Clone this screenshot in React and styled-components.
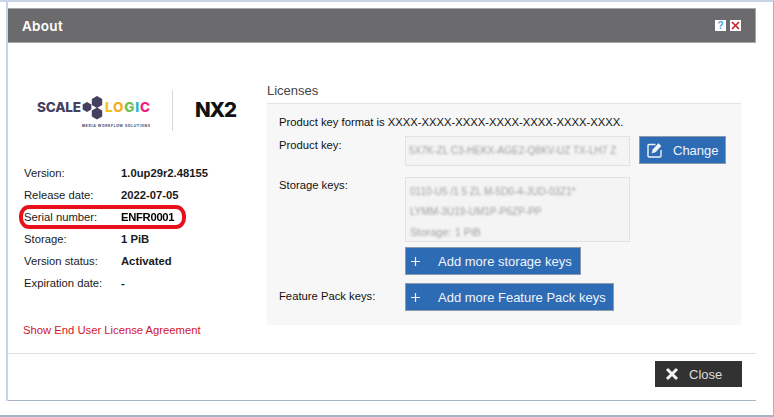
import React from 'react';
import styled, { createGlobalStyle } from 'styled-components';

const Global = createGlobalStyle`
  html, body { margin: 0; padding: 0; background: #fff; overflow: hidden; }
  body { font-family: "Liberation Sans", Arial, sans-serif; }
  * { box-sizing: border-box; }
`;
const Page = styled.div`
  width: 774px; height: 417px; background: #fff; overflow: hidden;
  border-top: 2px solid #c9d5e6; border-right: 1px solid #a9b4c8; border-bottom: 2px solid #a9b4c8;
`;
const Frame = styled.div`
  height: 399px; margin-left: 6px; padding-top: 6px;
  border-left: 2px solid #c9d5e6;
  display: flex; flex-direction: column;
`;
const Header = styled.div`
  width: 748px; height: 35px; flex: none; background: #6b6b6d; border: 1px solid #a8a8a8; border-left-width: 0;
  display: flex; align-items: center; justify-content: space-between; padding: 0 14px;
`;
const Title = styled.div`
  font: 600 13.5px "Inter", "Liberation Sans", sans-serif; color: #fff; letter-spacing: .3px;
`;
const HeaderBtns = styled.div` display: flex; gap: 4px; `;
const MiniBtn = styled.div`
  width: 11px; height: 11px; background: #fff; color: ${p => p.$c}; font: 700 10px/11px "Liberation Sans", sans-serif;
  display: flex; align-items: center; justify-content: center;
`;
const Body = styled.div`
  height: 311px; width: 748px; flex: none; display: flex; border-bottom: 1px solid #e0e0e0;
`;
const Left = styled.div`
  width: 259px; padding: 42px 0 0 15px; display: flex; flex-direction: column;
`;
const LogoSvg = styled.svg` display: block; margin-left: 14px; `;
const Info = styled.div`
  margin-top: 29px; display: grid; grid-template-columns: 98px 1fr; grid-auto-rows: 22px; align-items: center;
  font-size: 11.25px; color: #1a1a1a; position: relative;
`;
const Label = styled.div` white-space: nowrap; margin-left: 1px; `;
const Value = styled.div` font-weight: 700; white-space: nowrap; `;
const Serial = styled(Value)` filter: blur(.5px); letter-spacing: -.3px; color: #000; `;
const Ring = styled.div`
  position: absolute; left: -4px; top: 43px; width: 167px; height: 24px;
  border: 4px solid #e8101c; border-radius: 10px / 11px;
`;
const Eula = styled.div` margin-top: 30px; font-size: 11.25px; color: #d0142c; `;
const Right = styled.div` flex: 1; padding-top: 41px; display: flex; flex-direction: column; `;
const PanelTitle = styled.div` font-size: 13px; color: #444; height: 19px; line-height: 13px; `;
const Panel = styled.div`
  width: 474px; height: 222px; background: #f7f7f7; border-top: 1px solid #e4e4e4; padding: 12px 12px 0;
  font-size: 11.25px; line-height: 13px; color: #111;
`;
const Row = styled.div` display: grid; grid-template-columns: 126px 1fr; margin-top: ${p => p.$mt || 0}px; `;
const RowLabel = styled.div` padding-top: ${p => p.$pt || 0}px; `;
const KeyBox = styled.div`
  border: 1px solid #e2e2e2; background: #f4f4f4; width: 225px; height: ${p => p.$h}px; color: #a0a0a0;
  font-size: 10px; line-height: 20px; padding: ${p => p.$pad}; white-space: nowrap; overflow: hidden;
`;
const Fuzzy = styled.div` filter: blur(.8px); font-size: ${p => p.$fs || 10}px; `;
const Btn = styled.div`
  background: #2e6bb5; border: 1px solid #8d9aab; color: #f0f4fa; height: 28px; display: inline-flex; align-items: center;
  font-size: 13px; width: ${p => p.$w}px; padding-left: ${p => p.$pl}px; gap: ${p => p.$gap}px;
`;
const Inline = styled.div` display: flex; align-items: flex-start; gap: 9px; `;
const Footer = styled.div`
  height: 47px; width: 748px; flex: none; display: flex; justify-content: flex-end; align-items: flex-start; padding: 7px 14px 0 0;
  border-bottom: 1px solid #a9b4c8;
`;
const CloseBtn = styled.div`
  width: 87px; height: 26px; background: #323232; color: #ddd; display: flex; align-items: center; padding-left: 10px; gap: 10px; font-size: 13px;
`;

const hex = (cx, cy, r) => {
  const pts = [];
  for (let i = 0; i < 6; i++) {
    const a = (Math.PI / 3) * i + Math.PI / 6;
    pts.push(`${(cx + r * Math.cos(a)).toFixed(2)},${(cy + r * Math.sin(a)).toFixed(2)}`);
  }
  return pts.join(' ');
};

const Logo = () => (
  <LogoSvg width="205" height="48" viewBox="0 0 205 48">
    <text x="0" y="27" fontFamily="Inter, Liberation Sans, sans-serif" fontWeight="800" fontSize="13.500" fill="#45405f" textLength="44">SCALE</text>
    <g fill="#45405f">
      <polygon points={hex(50, 22, 5)} /><polygon points={hex(60, 17, 6)} /><polygon points={hex(60, 28.500, 6)} />
    </g>
    <text x="68" y="27" fontFamily="Inter, Liberation Sans, sans-serif" fontWeight="800" fontSize="13.500" textLength="45">
      <tspan fill="#f5c518">L</tspan><tspan fill="#f2b01c">O</tspan><tspan fill="#6cc24a">G</tspan><tspan fill="#1fb5d6">I</tspan><tspan fill="#ee1e7c">C</tspan>
    </text>
    <text x="45" y="41.500" fontFamily="Inter, Liberation Sans, sans-serif" fontWeight="700" fontSize="3.400" fill="#45405f" textLength="68">MEDIA WORKFLOW SOLUTIONS</text>
    <line x1="135.500" y1="5" x2="135.500" y2="46" stroke="#d8d8d8" />
    <text x="158" y="32" fontFamily="Inter, Liberation Sans, sans-serif" fontWeight="800" fontSize="20.500" fill="#111" textLength="42">NX2</text>
  </LogoSvg>
);

const Plus = () => (
  <svg width="11" height="11" viewBox="0 0 11 11"><path d="M5.500 1v9M1 5.500h9" stroke="#f0f4fa" strokeWidth="1.200" /></svg>
);

export default function App() {
  return (
    <Page>
      <Global />
      <Frame>
        <Header>
          <Title>About</Title>
          <HeaderBtns>
            <MiniBtn $c="#4a9fd0">?</MiniBtn>
            <MiniBtn $c="#c8202c">
              <svg width="9" height="9" viewBox="0 0 9 9"><path d="M1 1l7 7M8 1L1 8" stroke="currentColor" strokeWidth="1.600" /></svg>
            </MiniBtn>
          </HeaderBtns>
        </Header>
        <Body>
          <Left>
            <Logo />
            <Info>
              <Label>Version:</Label><Value>1.0up29r2.48155</Value>
              <Label>Release date:</Label><Value>2022-07-05</Value>
              <Label>Serial number:</Label><Serial>ENFR0001</Serial>
              <Label>Storage:</Label><Value>1 PiB</Value>
              <Label>Version status:</Label><Value>Activated</Value>
              <Label>Expiration date:</Label><Value>-</Value>
              <Ring />
            </Info>
            <Eula>Show End User License Agreement</Eula>
          </Left>
          <Right>
            <PanelTitle>Licenses</PanelTitle>
            <Panel>
              <div>Product key format is XXXX-XXXX-XXXX-XXXX-XXXX-XXXX-XXXX.</div>
              <Row $mt={7}>
                <RowLabel $pt={3}>Product key:</RowLabel>
                <Inline>
                  <KeyBox $h={30} $pad="4px 3px"><Fuzzy>5X7K-ZL C3-HEKX-AGE2-Q8KV-UZ TX-LH7 Z</Fuzzy></KeyBox>
                  <Btn $w={87} $pl={7} $gap={10}>
                    <svg width="16" height="16" viewBox="0 0 16 16" fill="none" stroke="#f0f4fa">
                      <path d="M8.500 2.500H2A1 1 0 0 0 1 3.500v10.500a1 1 0 0 0 1 1h11a1 1 0 0 0 1-1V8" strokeWidth="1.400" />
                      <path d="M5 11l1-3.500 5.500-6 2.500 2.500-5.500 6z" fill="#f0f4fa" strokeWidth=".6" />
                    </svg>
                    Change
                  </Btn>
                </Inline>
              </Row>
              <Row $mt={11}>
                <RowLabel $pt={2}>Storage keys:</RowLabel>
                <KeyBox $h={65} $pad="4px 4px">
                  <Fuzzy>0110-U5 /1 5 ZL M-5D0-4-JUD-03Z1*</Fuzzy>
                  <Fuzzy>LYMM-3U19-UM1P-P6ZP-PP</Fuzzy>
                  <Fuzzy $fs={11}>Storage: 1 PiB</Fuzzy>
                </KeyBox>
              </Row>
              <Row $mt={5}>
                <span />
                <Btn $w={176} $pl={4} $gap={17}><Plus />Add more storage keys</Btn>
              </Row>
              <Row $mt={8}>
                <RowLabel $pt={7}>Feature Pack keys:</RowLabel>
                <Btn $w={209} $pl={4} $gap={17}><Plus />Add more Feature Pack keys</Btn>
              </Row>
            </Panel>
          </Right>
        </Body>
        <Footer>
          <CloseBtn>
            <svg width="14" height="14" viewBox="0 0 14 14"><path d="M2 2l10 10M12 2L2 12" stroke="#f2f2f2" strokeWidth="3" /></svg>
            Close
          </CloseBtn>
        </Footer>
      </Frame>
    </Page>
  );
}
